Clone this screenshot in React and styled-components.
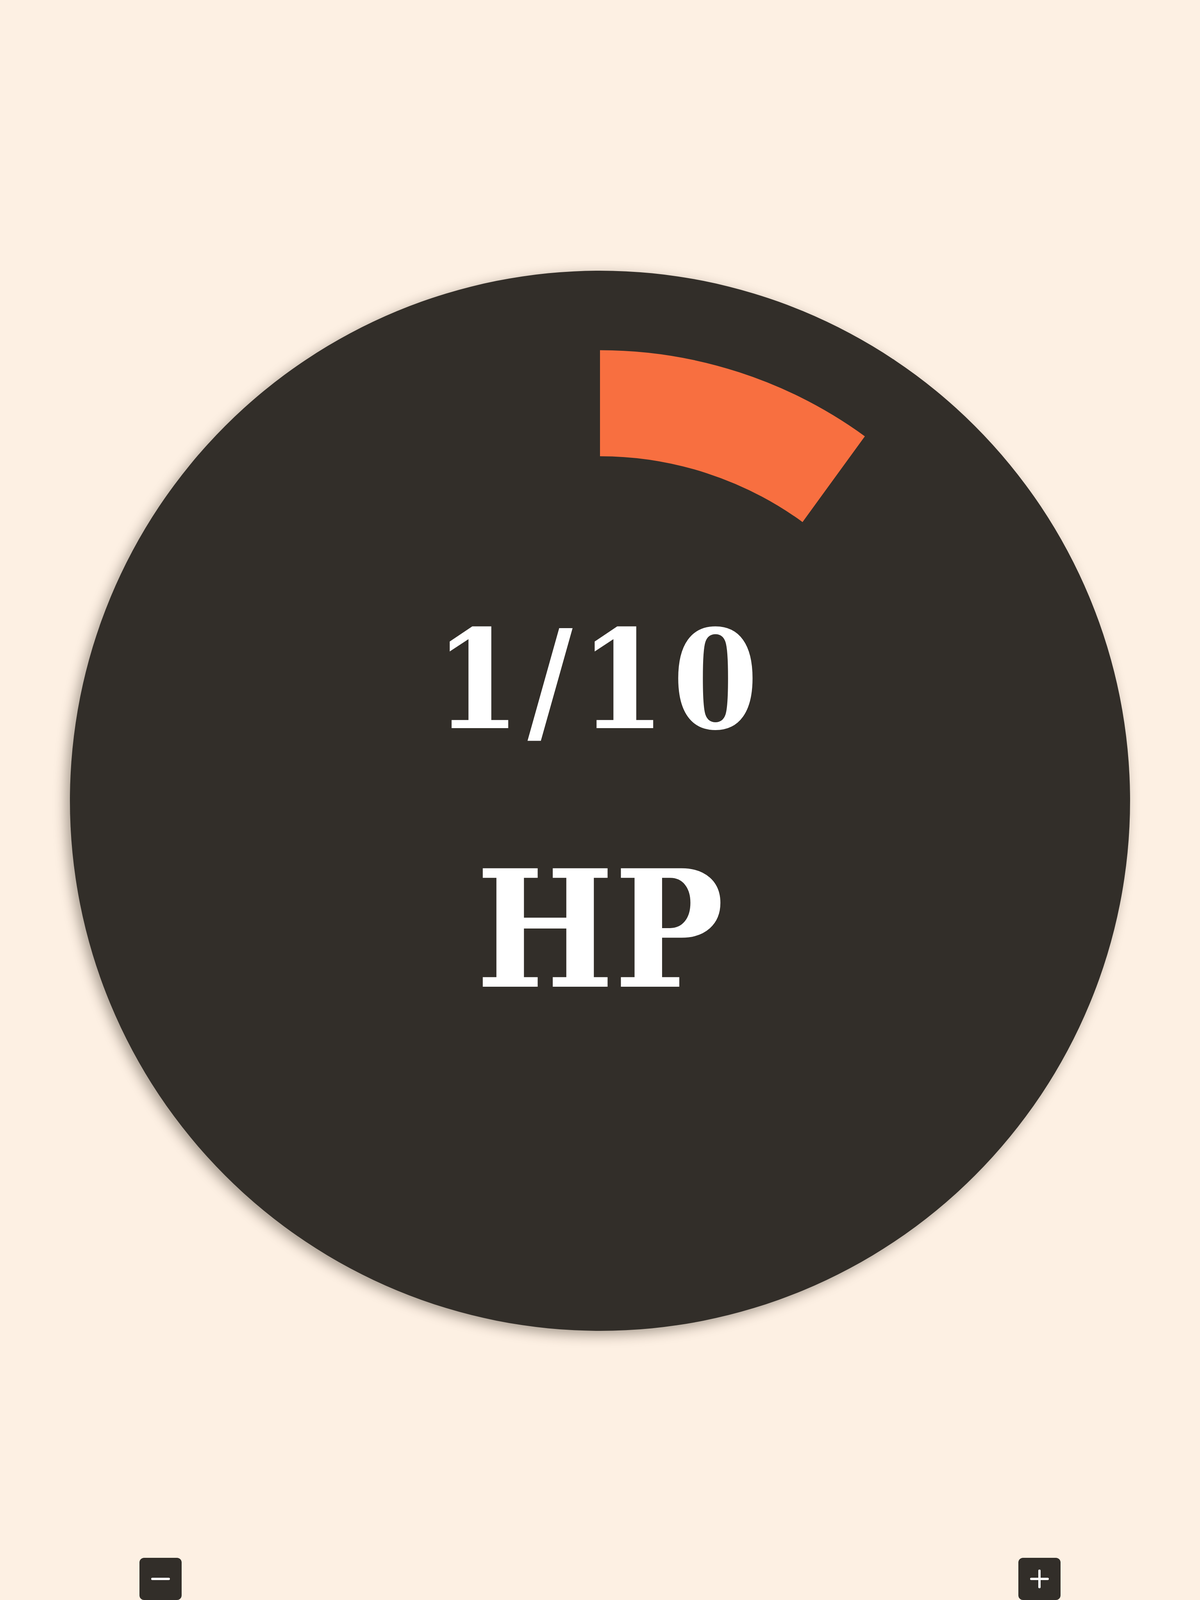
import React, { useState } from 'react';
import styled, { createGlobalStyle } from 'styled-components';
import { Minus, Plus } from 'lucide-react';

const MAX_HP = 10;

const GlobalStyle = createGlobalStyle`
  html, body {
    margin: 0;
    padding: 0;
    background: #fdf0e3;
  }
  * {
    box-sizing: border-box;
  }
`;

const Page = styled.main`
  height: 100vh;
  padding-top: 693px;
  display: flex;
  flex-direction: column;
  justify-content: space-between;
  align-items: center;
  overflow: hidden;
  background: #fdf0e3;
`;

const Dial = styled.div`
  position: relative;
  width: 2714px;
  height: 2714px;
  flex-shrink: 0;
  border-radius: 50%;
  background: #322e29;
  box-shadow: -10px 10px 32px rgba(40, 30, 20, 0.4);
  display: flex;
  flex-direction: column;
  align-items: center;
  justify-content: center;
  padding-top: 53px;
`;

const Ring = styled.svg`
  position: absolute;
  inset: 0;
  width: 100%;
  height: 100%;
  transform: rotate(-90deg);
`;

const Readout = styled.div`
  position: relative;
  display: flex;
  flex-direction: column;
  align-items: center;
  gap: 256px;
  color: #ffffff;
  font-family: "DejaVu Serif Condensed", "DejaVu Serif", serif;
  font-stretch: condensed;
  font-weight: bold;
  line-height: 1;
`;

const Count = styled.div`
  font-size: 351px;
  letter-spacing: 18px;
`;

const Unit = styled.div`
  font-size: 416px;
`;

const Controls = styled.div`
  width: 100%;
  display: flex;
  justify-content: space-between;
  padding: 0 357px;
`;

const StepButton = styled.button`
  width: 108px;
  height: 108px;
  padding: 0;
  border: none;
  border-radius: 12px;
  background: #322e29;
  color: #ffffff;
  display: flex;
  align-items: center;
  justify-content: center;
  cursor: pointer;
`;

export default function App() {
  const [hp, setHp] = useState(1);
  const r = 37.5;
  const circumference = 2 * Math.PI * r;
  const filled = (hp / MAX_HP) * circumference;

  return (
    <>
      <GlobalStyle />
      <Page>
        <Dial>
          <Ring viewBox="0 0 100 100">
            <circle
              cx="50"
              cy="50"
              r={r}
              fill="none"
              stroke="#f86f40"
              strokeWidth="10"
              strokeDasharray={`${filled} ${circumference}`}
            />
          </Ring>
          <Readout>
            <Count>{hp}/{MAX_HP}</Count>
            <Unit>HP</Unit>
          </Readout>
        </Dial>
        <Controls>
          <StepButton onClick={() => setHp((v) => Math.max(0, v - 1))}>
            <Minus size={72} strokeWidth={2} />
          </StepButton>
          <StepButton onClick={() => setHp((v) => Math.min(MAX_HP, v + 1))}>
            <Plus size={72} strokeWidth={2} />
          </StepButton>
        </Controls>
      </Page>
    </>
  );
}
